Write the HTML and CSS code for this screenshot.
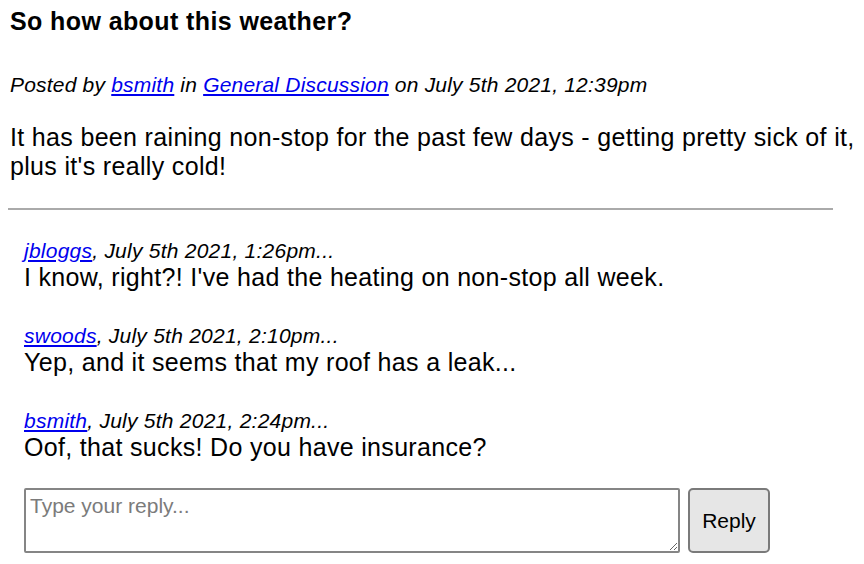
FILE: index.html
```html
<!DOCTYPE html>
<html>
<head>
<meta charset="utf-8">
<link rel="stylesheet" href="styles.css">
</head>
<body>
<div class="page">
  <h4 class="title">So how about this weather?</h4>
  <p class="meta">Posted by <a href="#">bsmith</a> in <a href="#">General Discussion</a> on July 5th 2021, 12:39pm</p>
  <p class="body">It has been raining non-stop for the past few days - getting pretty sick of it, plus it's really cold!</p>
  <hr class="rule">
  <div class="comments">
    <div class="comment">
      <div class="cmeta"><a href="#">jbloggs</a>, July 5th 2021, 1:26pm...</div>
      <div class="ctext">I know, right?! I've had the heating on non-stop all week.</div>
    </div>
    <div class="comment">
      <div class="cmeta"><a href="#">swoods</a>, July 5th 2021, 2:10pm...</div>
      <div class="ctext">Yep, and it seems that my roof has a leak...</div>
    </div>
    <div class="comment">
      <div class="cmeta"><a href="#">bsmith</a>, July 5th 2021, 2:24pm...</div>
      <div class="ctext">Oof, that sucks! Do you have insurance?</div>
    </div>
    <form class="reply">
      <textarea class="input" placeholder="Type your reply..."></textarea>
      <button type="button" class="btn">Reply</button>
    </form>
  </div>
</div>
</body>
</html>
```
FILE: styles.css
```css
html, body {
  margin: 0;
  padding: 0;
  background: #fff;
}
body {
  font-family: "Liberation Sans", Arial, sans-serif;
  color: #000;
}
.page {
  padding: 7px 0 0 10px;
  width: 850px;
}
.title {
  margin: 0;
  font-size: 25px;
  line-height: 28px;
  letter-spacing: 0.4px;
  font-weight: bold;
}
.meta {
  margin: 38px 0 0;
  font-size: 21px;
  line-height: 23px;
  letter-spacing: 0.2px;
  font-style: italic;
}
a {
  color: #0000ee;
}
.body {
  margin: 27px 0 0;
  font-size: 25px;
  line-height: 29px;
  letter-spacing: 0.33px;
}
.rule {
  margin: 27px 0 0 -2px;
  width: 825px;
  border: 0;
  border-top: 2px solid #aaa;
}
.comments {
  padding-left: 14px;
  padding-top: 28px;
}
.comment {
  margin-bottom: 32px;
}
.comment:nth-last-child(2) {
  margin-bottom: 27px;
}
.cmeta {
  font-size: 21px;
  line-height: 25px;
  letter-spacing: 0.24px;
  font-style: italic;
}
.ctext {
  font-size: 25px;
  line-height: 28px;
  letter-spacing: 0.32px;
}
.reply {
  display: flex;
  gap: 8px;
  align-items: stretch;
}
.input {
  width: 656px;
  height: 65px;
  box-sizing: border-box;
  border: 2px solid #858585;
  border-radius: 2px;
  padding: 4px 4px;
  font-family: "Liberation Sans", Arial, sans-serif;
  font-size: 21px;
  resize: vertical;
  margin: 0;
}
.input::placeholder {
  color: #7b7b7b;
}
.btn {
  width: 82px;
  height: 65px;
  box-sizing: border-box;
  background: #e6e6e6;
  border: 2px solid #7a7a7a;
  border-radius: 5px;
  font-family: "Liberation Sans", Arial, sans-serif;
  font-size: 21px;
  color: #000;
  margin: 0;
  padding: 0;
}
```
